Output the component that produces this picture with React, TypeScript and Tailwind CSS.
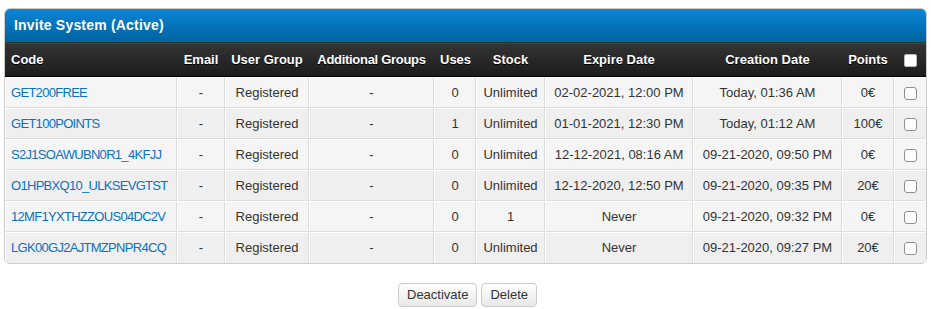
import React from "react";

const invites = [
  { code: "GET200FREE", uses: "0", stock: "Unlimited", expire: "02-02-2021, 12:00 PM", created: "Today, 01:36 AM", points: "0€" },
  { code: "GET100POINTS", uses: "1", stock: "Unlimited", expire: "01-01-2021, 12:30 PM", created: "Today, 01:12 AM", points: "100€" },
  { code: "S2J1SOAWUBN0R1_4KFJJ", uses: "0", stock: "Unlimited", expire: "12-12-2021, 08:16 AM", created: "09-21-2020, 09:50 PM", points: "0€" },
  { code: "O1HPBXQ10_ULKSEVGTST", uses: "0", stock: "Unlimited", expire: "12-12-2020, 12:50 PM", created: "09-21-2020, 09:35 PM", points: "20€" },
  { code: "12MF1YXTHZZOUS04DC2V", uses: "0", stock: "1", expire: "Never", created: "09-21-2020, 09:32 PM", points: "0€" },
  { code: "LGK00GJ2AJTMZPNPR4CQ", uses: "0", stock: "Unlimited", expire: "Never", created: "09-21-2020, 09:27 PM", points: "20€" },
];

const Box = ({ light }: { light?: boolean }) => (
  <span
    className={
      light
        ? "inline-block w-[13px] h-[13px] rounded-[2px] bg-white border border-[#bbb] align-middle"
        : "inline-block w-[13px] h-[13px] rounded-[3px] bg-white border border-[#8f8f8f] align-middle"
    }
  />
);

const App = () => {
  const th = "h-[34px] px-[6px] text-[13px] font-bold text-white text-center [text-shadow:0_1px_0_#000] border-t border-t-[#444] border-b border-b-[#000]";

  return (
    <div className="w-[931px] h-[309px] bg-white px-[4px] pt-[8px] font-['Tahoma','Liberation_Sans',sans-serif] text-[13px] text-[#333]">
      <div className="border border-[#ccc] rounded-[6px] overflow-hidden">
        <div className="h-[34px] flex items-center px-[9px] bg-gradient-to-b from-[#0a86d8] to-[#0062a0] text-white font-bold text-[14px] tracking-[0.2px] border-b border-b-[#263c30]">
          Invite System (Active)
        </div>
        <table className="w-full table-fixed border-separate border-spacing-0">
          <colgroup>
            <col className="w-[172px]" />
            <col className="w-[48px]" />
            <col className="w-[84px]" />
            <col className="w-[125px]" />
            <col className="w-[42px]" />
            <col className="w-[69px]" />
            <col className="w-[148px]" />
            <col className="w-[149px]" />
            <col className="w-[52px]" />
            <col />
          </colgroup>
          <thead className="bg-gradient-to-b from-[#343434] to-[#1c1c1c]">
            <tr>
              <th className={th + " text-left"}>Code</th>
              <th className={th}>Email</th>
              <th className={th}>User Group</th>
              <th className={th + " whitespace-nowrap tracking-[-0.3px]"}>Additional Groups</th>
              <th className={th}>Uses</th>
              <th className={th}>Stock</th>
              <th className={th}>Expire Date</th>
              <th className={th}>Creation Date</th>
              <th className={th}>Points</th>
              <th className={th}>
                <Box light />
              </th>
            </tr>
          </thead>
          <tbody>
            {invites.map((inv, i) => {
              const bg = i % 2 === 0 ? "bg-[#f5f5f5]" : "bg-[#efefef]";
              const td = `${bg} h-[31px] px-[6px] text-center whitespace-nowrap border-t border-t-white border-l border-l-white border-r border-r-[#ddd] border-b border-b-[#ddd] ${i === invites.length - 1 ? "border-b-transparent" : ""}`;
              return (
                <tr key={inv.code}>
                  <td className={td + " text-left pl-[5px]"}>
                    <a className="text-[#0a72c0] tracking-[-0.7px]">{inv.code}</a>
                  </td>
                  <td className={td}>-</td>
                  <td className={td}>Registered</td>
                  <td className={td}>-</td>
                  <td className={td}>{inv.uses}</td>
                  <td className={td}>{inv.stock}</td>
                  <td className={td}>{inv.expire}</td>
                  <td className={td}>{inv.created}</td>
                  <td className={td}>{inv.points}</td>
                  <td className={td + " border-r-transparent"}>
                    <Box />
                  </td>
                </tr>
              );
            })}
          </tbody>
        </table>
      </div>

      <div className="flex justify-center gap-[4px] mt-[19px] pl-[4px]">
        <button className="h-[24px] px-[8px] rounded-[4px] border border-[#ccc] bg-gradient-to-b from-white to-[#e8e8e8] text-[13px] text-[#333]">
          Deactivate
        </button>
        <button className="h-[24px] px-[8px] rounded-[4px] border border-[#ccc] bg-gradient-to-b from-white to-[#e8e8e8] text-[13px] text-[#333]">
          Delete
        </button>
      </div>
    </div>
  );
};

export default App;
